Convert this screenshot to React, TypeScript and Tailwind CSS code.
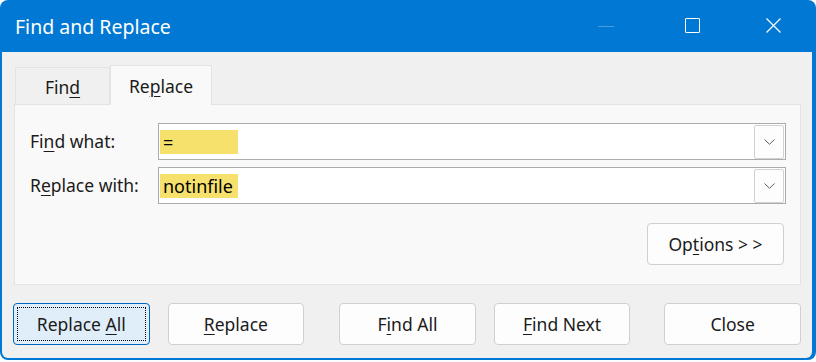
import React from "react";

const font = { fontFamily: '"Noto Sans", "Open Sans", sans-serif' };

const Key = ({ children }: { children: React.ReactNode }) => (
  <span className="underline underline-offset-[3px] decoration-1">{children}</span>
);

const Chevron = () => (
  <svg width="11" height="6" viewBox="0 0 11 6" fill="none">
    <path d="M0.5 0.5 L5.5 5.3 L10.5 0.5" stroke="#5f5f5f" strokeWidth="1" />
  </svg>
);

const Combo = ({ value }: { value: string }) => (
  <div className="flex h-[37px] flex-1 items-center border border-[#acacac] bg-white pl-px">
    <span className="flex h-[24px] w-[78px] items-center bg-[#f6e16c] pl-[3px] text-[18px] leading-none text-black">
      {value}
    </span>
    <div className="flex-1" />
    <button className="mr-px flex h-[34px] w-[30px] items-center justify-center rounded-[2px] border border-[#d2d2d2] bg-[#fdfdfd]">
      <Chevron />
    </button>
  </div>
);

const Btn = ({
  children,
  className = "",
  active = false,
}: {
  children: React.ReactNode;
  className?: string;
  active?: boolean;
}) => (
  <button
    className={
      "flex h-[42px] w-[137px] items-center justify-center rounded-[4px] border text-[17.5px] text-[#1b1b1b] " +
      (active
        ? "border-[#0067c0] bg-[#e0eef9] outline-1 outline-dotted outline-black outline-offset-[-5px] "
        : "border-[#d0d0d0] bg-[#fdfdfd] ") +
      className
    }
  >
    <span className="whitespace-pre">{children}</span>
  </button>
);

export default function App() {
  return (
    <div className="h-[362px] w-[816px] bg-white" style={font}>
      <div className="flex h-[360px] w-[816px] flex-col rounded-[8px] bg-[#0078d4] pb-[2px] pl-[2px] pr-[4px]">
        {/* title bar */}
        <div className="flex h-[52px] items-center text-white">
          <span className="ml-[13px] mt-[2px] text-[19.5px] leading-none">Find and Replace</span>
          <div className="flex-1" />
          <div className="mr-[6px] h-px w-[16px] bg-[#4a9de0]" />
          <div className="ml-[65px] mb-[1px] h-[15px] w-[15px] rounded-[1px] border border-white" />
          <svg className="ml-[66px] mr-[31px] mb-[1px]" width="15" height="15" viewBox="0 0 15 15">
            <path d="M0.5 0.5 L14.5 14.5 M14.5 0.5 L0.5 14.5" stroke="white" strokeWidth="1.2" />
          </svg>
        </div>

        {/* body */}
        <div className="flex flex-1 flex-col rounded-b-[6px] bg-[#f0f0f0] pl-[12px] pr-[11px] pt-[13px] text-[#1b1b1b]">
          <div className="flex items-end">
            <div className="ml-px flex h-[37px] w-[95px] items-center justify-center border border-b-0 border-[#e3e3e3] bg-[#f0f0f0] pt-[2px] text-[17.5px]">
              <span>
                Fin<Key>d</Key>
              </span>
            </div>
            <div className="relative -mb-px flex h-[40px] w-[102px] items-center justify-center border border-b-0 border-[#e3e3e3] bg-[#f9f9f9] pt-[1px] text-[17.5px]">
              <span>
                Re<Key>p</Key>lace
              </span>
            </div>
          </div>

          <div className="flex h-[181px] flex-col border border-[#e3e3e3] bg-[#f9f9f9] pl-[15px] pr-[14px] pt-[18px] text-[17.5px]">
            <div className="flex items-center">
              <span className="w-[128px]">
                Fi<Key>n</Key>d what:
              </span>
              <Combo value="=" />
            </div>
            <div className="mt-[7px] flex items-center">
              <span className="w-[128px]">
                R<Key>e</Key>place with:
              </span>
              <Combo value="notinfile" />
            </div>
            <div className="mt-[19px] flex justify-end pr-[2px]">
              <Btn>
                Op<Key>t</Key>ions &gt; &gt;
              </Btn>
            </div>
          </div>

          <div className="mt-[18px] flex">
            <Btn active className="-ml-px">
              Replace <Key>A</Key>ll
            </Btn>
            <Btn className="ml-[18px]">
              <Key>R</Key>eplace
            </Btn>
            <Btn className="ml-[35px]">
              F<Key>i</Key>nd All
            </Btn>
            <Btn className="ml-[18px]">
              <Key>F</Key>ind Next
            </Btn>
            <Btn className="ml-[34px]">Close</Btn>
          </div>
        </div>
      </div>
    </div>
  );
}
